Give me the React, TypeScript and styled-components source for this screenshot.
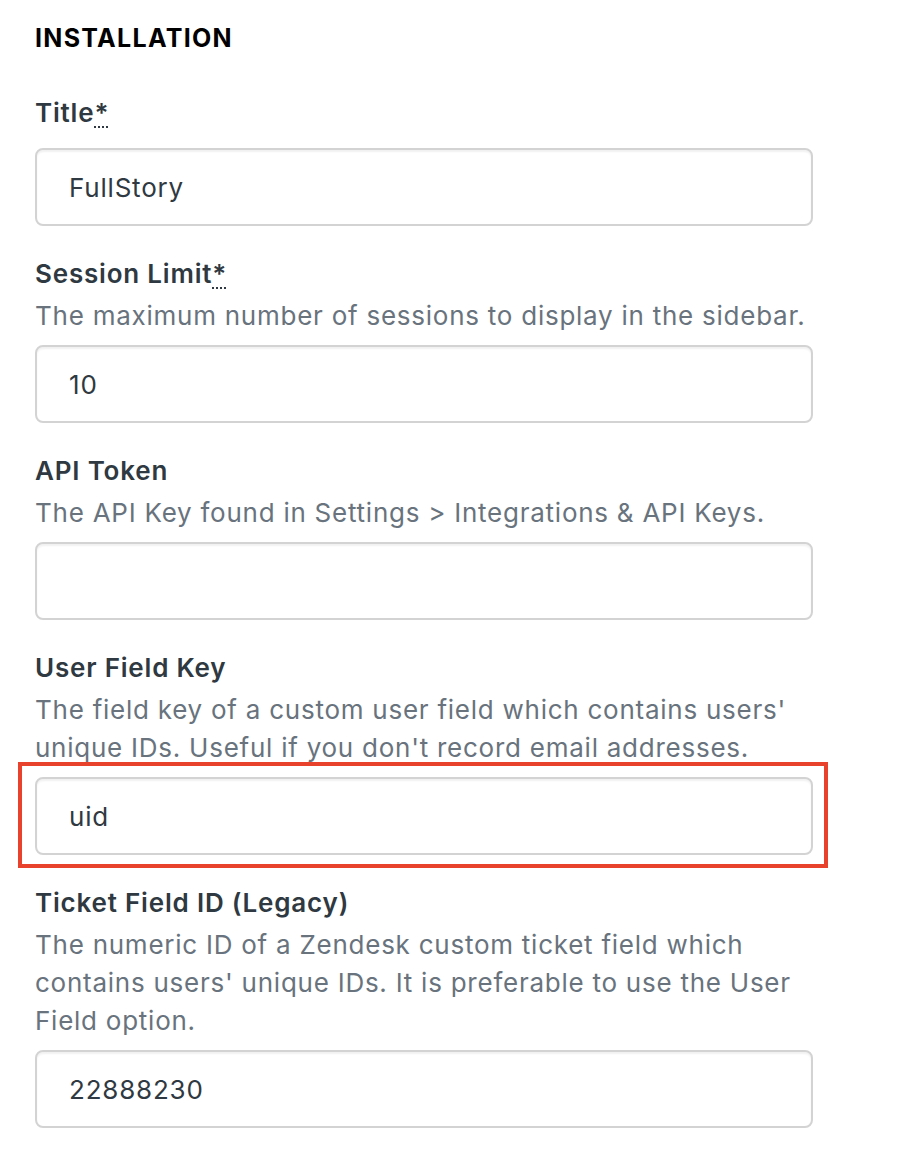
import React from "react";
import styled, { createGlobalStyle } from "styled-components";

const GlobalStyle = createGlobalStyle`
  html, body {
    margin: 0;
    padding: 0;
    background: #ffffff;
  }
  body {
    font-family: Inter, "Noto Sans", "Liberation Sans", sans-serif;
    -webkit-font-smoothing: antialiased;
  }
`;

const Page = styled.div`
  width: 922px;
  min-height: 1160px;
  box-sizing: border-box;
  padding: 23px 0 0 35px;
`;

const Form = styled.form`
  width: 778px;
  display: flex;
  flex-direction: column;
`;

const Heading = styled.h2`
  margin: 0 0 40px;
  font-size: 25px;
  line-height: 30px;
  font-weight: 700;
  color: #000000;
  letter-spacing: 1.3px;
`;

const Field = styled.div`
  display: flex;
  flex-direction: column;
  margin-bottom: 28px;
`;

const Label = styled.label`
  font-size: 26px;
  line-height: 40px;
  font-weight: 600;
  color: #2f3941;
  letter-spacing: 0.8px;
`;

const Required = styled.abbr`
  text-decoration: underline dotted;
  text-decoration-thickness: 2px;
  text-underline-offset: 4px;
  cursor: help;
`;

const Hint = styled.p`
  margin: 3px 0 0;
  font-size: 26px;
  line-height: 38px;
  font-weight: 400;
  color: #68737d;
  letter-spacing: 0.75px;
`;

const InputWrap = styled.div<{ $hasHint: boolean }>`
  position: relative;
  margin-top: ${(p) => (p.$hasHint ? "10px" : "15px")};
`;

const TextInput = styled.input`
  display: block;
  width: 100%;
  height: 78px;
  box-sizing: border-box;
  padding: 0 32px;
  border: 2px solid #d3d3d3;
  border-radius: 8px;
  box-shadow: inset 0 2px 2px rgba(0, 0, 0, 0.06);
  background: #ffffff;
  font-family: inherit;
  font-size: 26px;
  letter-spacing: 0.8px;
  color: #2f3941;
  outline: none;
`;

const Highlight = styled.div`
  position: absolute;
  left: -17px;
  right: -15px;
  top: -15px;
  bottom: -13px;
  border: 4px solid #e8412c;
  pointer-events: none;
`;

type FieldDef = {
  label: string;
  required?: boolean;
  hint?: string;
  value: string;
  highlight?: boolean;
};

const fields: FieldDef[] = [
  { label: "Title", required: true, value: "FullStory" },
  {
    label: "Session Limit",
    required: true,
    hint: "The maximum number of sessions to display in the sidebar.",
    value: "10",
  },
  {
    label: "API Token",
    hint: "The API Key found in Settings > Integrations & API Keys.",
    value: "",
  },
  {
    label: "User Field Key",
    hint: "The field key of a custom user field which contains users' unique IDs. Useful if you don't record email addresses.",
    value: "uid",
    highlight: true,
  },
  {
    label: "Ticket Field ID (Legacy)",
    hint: "The numeric ID of a Zendesk custom ticket field which contains users' unique IDs. It is preferable to use the User Field option.",
    value: "22888230",
  },
];

export default function App() {
  return (
    <>
      <GlobalStyle />
      <Page>
        <Form onSubmit={(e) => e.preventDefault()}>
          <Heading>INSTALLATION</Heading>
          {fields.map((f, i) => (
            <Field key={f.label}>
              <Label htmlFor={`field-${i}`}>
                {f.label}
                {f.required && <Required title="required">*</Required>}
              </Label>
              {f.hint && <Hint>{f.hint}</Hint>}
              <InputWrap $hasHint={!!f.hint}>
                <TextInput id={`field-${i}`} type="text" defaultValue={f.value} />
                {f.highlight && <Highlight />}
              </InputWrap>
            </Field>
          ))}
        </Form>
      </Page>
    </>
  );
}
